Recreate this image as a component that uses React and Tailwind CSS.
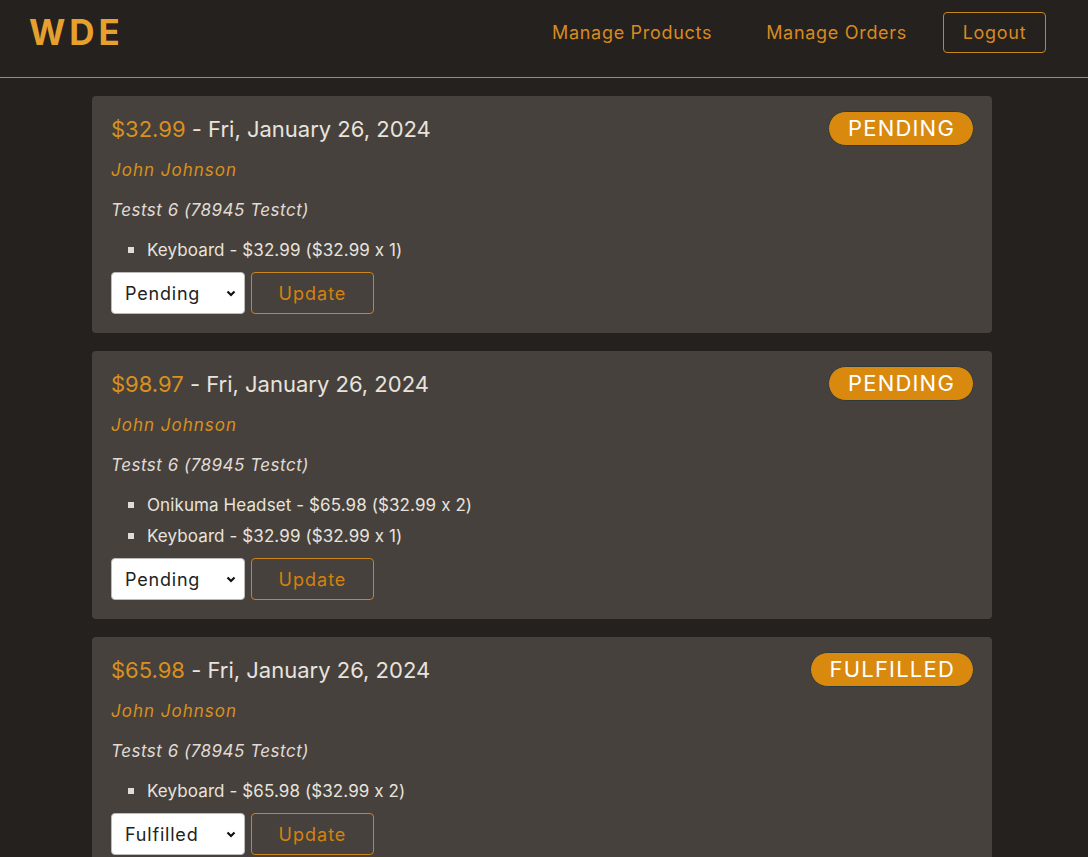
import React from "react";

const orders = [
  {
    total: "$32.99",
    date: "Fri, January 26, 2024",
    status: "PENDING",
    name: "John Johnson",
    address: "Testst 6 (78945 Testct)",
    items: ["Keyboard - $32.99 ($32.99 x 1)"],
    select: "Pending",
  },
  {
    total: "$98.97",
    date: "Fri, January 26, 2024",
    status: "PENDING",
    name: "John Johnson",
    address: "Testst 6 (78945 Testct)",
    items: ["Onikuma Headset - $65.98 ($32.99 x 2)", "Keyboard - $32.99 ($32.99 x 1)"],
    select: "Pending",
  },
  {
    total: "$65.98",
    date: "Fri, January 26, 2024",
    status: "FULFILLED",
    name: "John Johnson",
    address: "Testst 6 (78945 Testct)",
    items: ["Keyboard - $65.98 ($32.99 x 2)"],
    select: "Fulfilled",
  },
];

function OrderCard({ o }) {
  return (
    <div className="bg-[#46413c] rounded-[4px] pl-[19px] pr-[18px] pt-[15px] pb-[19px]">
      <div className="flex items-center justify-between h-[35px]">
        <div className="text-[22px] leading-[26px] text-[#e8e3dd]">
          <span className="text-[#d8901e]">{o.total}</span> - {o.date}
        </div>
        <div className="h-[35px] pl-[19px] pr-[18px] rounded-full bg-[#d8890e] text-white text-[22px] tracking-[1.2px] flex items-center border border-[#2e3a3a]">
          {o.status}
        </div>
      </div>
      <div className="mt-[12px] text-[17px] leading-[24px] italic tracking-[1px] text-[#d8901e]">{o.name}</div>
      <div className="mt-[16px] text-[17px] leading-[24px] italic tracking-[0.5px] text-[#e0dbd5]">{o.address}</div>
      <ul className="mt-[16px] flex flex-col gap-[7px]">
        {o.items.map((it, i) => (
          <li key={i} className="flex items-center text-[17px] leading-[24px] tracking-[0.1px] text-[#e8e3dd]">
            <span className="ml-[17px] mr-[13px] w-[6px] h-[6px] bg-[#e0dbd5] inline-block"></span>
            {it}
          </li>
        ))}
      </ul>
      <div className="mt-[10px] flex gap-[6px]">
        <div className="w-[134px] h-[42px] bg-white rounded-[4px] border border-[#bbb] flex items-center justify-between pl-[13px] pr-[7px] text-[18px] tracking-[0.8px] text-[#222]">
          <span>{o.select}</span>
          <svg width="12" height="12" viewBox="0 0 12 12"><path d="M2.5 4.5 L6 8 L9.5 4.5" fill="none" stroke="#111" strokeWidth="2.2" /></svg>
        </div>
        <button className="w-[123px] h-[42px] rounded-[4px] border border-[#c8861a] text-[#d4820e] text-[18px] tracking-[1px] bg-transparent">
          Update
        </button>
      </div>
    </div>
  );
}

export default function App() {
  return (
    <div
      className="min-h-[857px] bg-[#25211f] [font-feature-settings:'calt'_0]"
      style={{ fontFamily: 'Inter, "Liberation Sans", sans-serif' }}
    >
      <header className="h-[78px] pt-[12px] flex items-start justify-between pl-[29px] pr-[42px] border-b border-[#b58a3c]">
        <div className="h-[41px] flex items-center text-[35px] font-bold tracking-[4px] text-[#e6a02e]">WDE</div>
        <nav className="flex items-center h-[41px]">
          <a className="text-[18px] tracking-[0.7px] text-[#d98a1e]">Manage Products</a>
          <a className="ml-[54px] text-[18px] tracking-[0.7px] text-[#d98a1e]">Manage Orders</a>
          <button className="ml-[36px] w-[103px] h-[41px] rounded-[4px] border border-[#c8861a] text-[18px] tracking-[0.7px] text-[#d98a1e]">
            Logout
          </button>
        </nav>
      </header>
      <main className="w-[900px] ml-[92px] pt-[18px] flex flex-col gap-[18px] pb-[20px]">
        {orders.map((o, i) => (
          <OrderCard key={i} o={o} />
        ))}
      </main>
    </div>
  );
}
